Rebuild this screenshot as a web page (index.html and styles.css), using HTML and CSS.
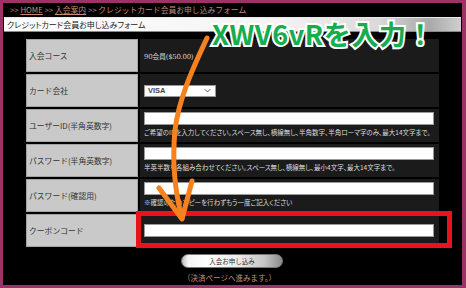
FILE: index.html
```html
<!DOCTYPE html>
<html lang="ja">
<head>
<meta charset="utf-8">
<title>クレジットカード会員お申し込みフォーム</title>
<link rel="stylesheet" href="styles.css">
</head>
<body>
<div class="frame">
  <div class="crumbs">&gt;&gt; <a class="crumb-link">HOME</a> &gt;&gt; <a class="crumb-link">入会案内</a> &gt;&gt; クレジットカード会員お申し込みフォーム</div>
  <div class="titlebar">クレジットカード会員お申し込みフォーム</div>
  <div class="form">
    <div class="label">入会コース</div>
    <div class="value middle"><span class="course">90会員($50.00)</span></div>

    <div class="label">カード会社</div>
    <div class="value middle">
      <div class="select"><span class="select-text">VISA</span>
        <svg class="chev" width="7" height="5" viewBox="0 0 7 5"><polyline points="0.5,1 3.5,4 6.5,1" fill="none" stroke="#666" stroke-width="1"/></svg>
      </div>
    </div>

    <div class="label">ユーザーID(半角英数字)</div>
    <div class="value stack">
      <input class="field" type="text">
      <div class="help">ご希望のIDを入力してください。スペース無し、横線無し、半角数字、半角ローマ字のみ、最大14文字まで。</div>
    </div>

    <div class="label">パスワード(半角英数字)</div>
    <div class="value stack">
      <input class="field" type="password">
      <div class="help">半英半数を各組み合わせてください。スペース無し、横線無し、最小4文字、最大14文字まで。</div>
    </div>

    <div class="label">パスワード(確認用)</div>
    <div class="value stack">
      <input class="field" type="password">
      <div class="help">※確認のためコピーを行わずもう一度ご記入ください</div>
    </div>

    <div class="label">クーポンコード</div>
    <div class="value middle"><input class="field" type="text"></div>
  </div>
  <div class="btn">入会お申し込み</div>
  <div class="note">（決済ページへ進みます。）</div>

  <div class="redbox"></div>
  <svg class="arrow" width="466" height="288" viewBox="0 0 466 288">
    <path d="M207 38 C196 62 179 96 175 130 C172 162 175 192 182 218" fill="none" stroke="#f5821f" stroke-width="5" stroke-linecap="round"/>
    <path d="M159 188 L182 219 L192 181" fill="none" stroke="#f5821f" stroke-width="5" stroke-linecap="round" stroke-linejoin="round"/>
  </svg>
  <div class="callout">XWV6vRを入力！</div>
</div>
</body>
</html>
```

FILE: styles.css
```css
html, body {
  margin: 0;
  padding: 0;
}
body {
  width: 466px;
  height: 288px;
  overflow: hidden;
  font-family: "Noto Sans CJK JP", "Noto Sans", sans-serif;
}
.frame {
  position: relative;
  box-sizing: border-box;
  width: 466px;
  height: 288px;
  background: #000;
  border: 3px solid #9a3467;
  border-right-width: 4px;
}
.crumbs {
  height: 14px;
  line-height: 14px;
  padding-left: 7px;
  font-size: 7.8px;
  color: #c58a78;
  white-space: nowrap;
}
.crumb-link {
  color: #c58a78;
  text-decoration: underline;
}
.titlebar {
  margin-left: 1px;
  width: 457px;
  height: 15px;
  line-height: 14px;
  box-sizing: border-box;
  padding-left: 3px;
  font-size: 8px;
  font-feature-settings: "palt";
  color: #222;
  background: linear-gradient(to right, #fdfdfd 0%, #f4f4f4 60%, #d9d9d9 82%, #a9a9a9 93%, #cfcfcf 100%);
  border-top: 1px solid #e8e8e8;
  border-bottom: 1px solid #8a8a8a;
  white-space: nowrap;
}
.form {
  margin: 7px 0 0 23px;
  display: grid;
  grid-template-columns: 112px 299px;
  grid-template-rows: repeat(6, 33px);
  gap: 2px;
  width: 413px;
}
.label {
  background: #c9c9c9;
  box-shadow: inset 0 0 0 1px #a3a3a3;
  display: flex;
  align-items: center;
  padding-left: 3px;
  font-size: 7.8px;
  color: #333;
  white-space: nowrap;
}
.value {
  background: #1b1b1b;
  padding-left: 4px;
  display: flex;
  box-sizing: border-box;
}
.middle {
  align-items: center;
}
.stack {
  flex-direction: column;
  padding-top: 3px;
}
.course {
  font-size: 7px;
  color: #cfcfcf;
  font-family: "DejaVu Serif", "Noto Sans CJK JP", serif;
  letter-spacing: -0.3px;
}
.select {
  width: 72px;
  height: 12px;
  box-sizing: border-box;
  background: #fff;
  border: 1px solid #999;
  display: flex;
  align-items: center;
  justify-content: space-between;
  padding: 0 4px 0 3px;
}
.select-text {
  font-size: 7.5px;
  font-weight: 700;
  color: #444;
  font-family: "Liberation Sans", sans-serif;
}
.chev {
  display: block;
}
.field {
  display: block;
  width: 290px;
  height: 13px;
  box-sizing: border-box;
  margin: 0;
  padding: 0;
  background: #fff;
  border: 1px solid #9a9a9a;
  border-radius: 0;
  outline: none;
}
.help {
  margin-top: 3px;
  font-size: 6.5px;
  font-feature-settings: "palt";
  line-height: 8px;
  color: #dcdcdc;
  white-space: nowrap;
}
.btn {
  margin: 7px 0 0 178px;
  width: 102px;
  height: 14px;
  line-height: 13px;
  box-sizing: border-box;
  border-radius: 7px;
  background: linear-gradient(to right, #b9b9b9 0%, #f4f4f4 6%, #ffffff 25%, #ededed 55%, #c6c6c6 82%, #8c8c8c 100%);
  border: 1px solid #777;
  text-align: center;
  font-size: 6.5px;
  color: #333;
}
.note {
  margin-top: 3px;
  text-align: center;
  margin-left: -6px;
  line-height: 14px;
  font-size: 7.5px;
  color: #c58a78;
}
.redbox {
  position: absolute;
  left: 133px;
  top: 208px;
  width: 316px;
  height: 37px;
  box-sizing: border-box;
  border: 5px solid #e8141c;
}
.arrow {
  position: absolute;
  left: -3px;
  top: -3px;
}
.callout {
  position: absolute;
  left: 209px;
  top: 14px;
  font-size: 27px;
  line-height: 34px;
  font-weight: 700;
  color: #17ad4e;
  -webkit-text-stroke: 4px #fff;
  paint-order: stroke fill;
  white-space: nowrap;
  letter-spacing: 0.6px;
}
```
